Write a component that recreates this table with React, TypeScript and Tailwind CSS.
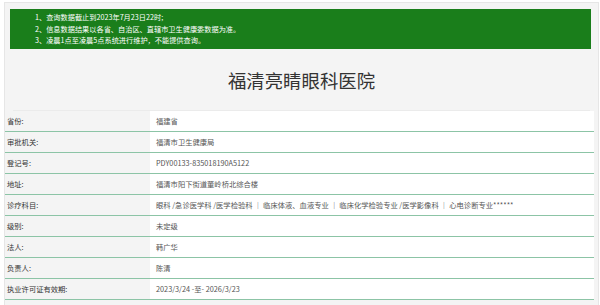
import React from 'react'

const notices = [
  '1、查询数据截止到2023年7月23日22时;',
  '2、信息数据结果以各省、自治区、直辖市卫生健康委数据为准。',
  '3、凌晨1点至凌晨5点系统进行维护，不能提供查询。',
]

const rows: [string, string][] = [
  ['省份:', '福建省'],
  ['审批机关:', '福清市卫生健康局'],
  ['登记号:', 'PDY00133-835018190A5122'],
  ['地址:', '福清市阳下街道董岭桥北综合楼'],
  ['诊疗科目:', '眼科 /急诊医学科 /医学检验科 ｜ 临床体液、血液专业 ｜ 临床化学检验专业 /医学影像科 ｜ 心电诊断专业******'],
  ['级别:', '未定级'],
  ['法人:', '韩广华'],
  ['负责人:', '陈清'],
  ['执业许可证有效期:', '2023/3/24 -至- 2026/3/23'],
]

export default function App() {
  return (
    <div className="w-[600px] h-[305px] overflow-hidden bg-white font-['Noto_Sans_CJK_SC','Noto_Sans',sans-serif]">
      <div className="ml-[4px] mr-[1px] mt-[2px] h-[320px] bg-[#f4f4f4] border border-[#e6e6e6] pt-[6px]">
        {/* notice */}
        <div className="ml-[5px] mr-[7px] h-[40px] bg-[#1a7e1b] pl-[25px] pt-[3px] text-[7.2px] leading-[11.6px] text-white">
          {notices.map((n) => (
            <div key={n}>{n}</div>
          ))}
        </div>

        {/* title */}
        <div className="mx-[8px] h-[62px] flex items-center justify-center border-b border-[#ebebeb] text-[18.4px] text-[#333] pt-[3px]">
          福清亮睛眼科医院
        </div>

        {/* info table */}
        <div className="mr-[4px]">
          {rows.map(([label, value]) => (
            <div key={label} className="flex h-[21px] border-b border-[#8cc4a6]">
              <div className="w-[145px] shrink-0 flex items-center pl-[2px] text-[7.3px] text-[#333]">
                {label}
              </div>
              <div className="flex-1 bg-white flex items-center pl-[6px] text-[7.3px] text-[#555] whitespace-nowrap">
                {value}
              </div>
            </div>
          ))}
        </div>
      </div>
    </div>
  )
}
